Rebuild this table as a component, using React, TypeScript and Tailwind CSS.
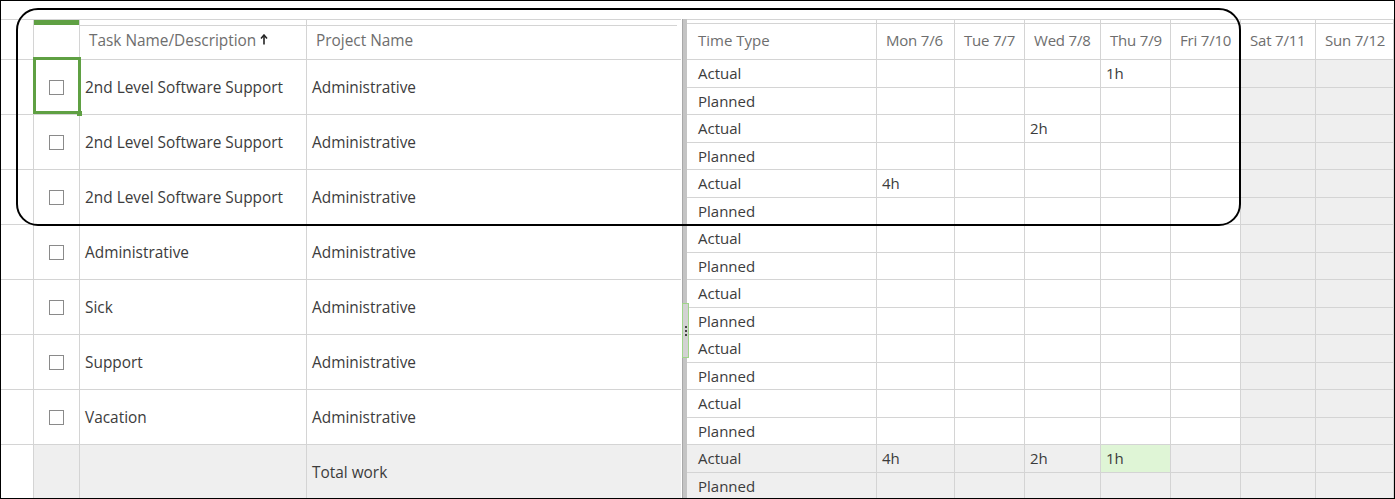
import React from "react";

const rows = [
  { task: "2nd Level Software Support", actual: { 3: "1h" } as Record<number, string> },
  { task: "2nd Level Software Support", actual: { 2: "2h" } as Record<number, string> },
  { task: "2nd Level Software Support", actual: { 0: "4h" } as Record<number, string> },
  { task: "Administrative", actual: {} as Record<number, string> },
  { task: "Sick", actual: {} as Record<number, string> },
  { task: "Support", actual: {} as Record<number, string> },
  { task: "Vacation", actual: {} as Record<number, string> },
];

const days = [
  { label: "Mon 7/6", w: "w-[78px]", weekend: false },
  { label: "Tue 7/7", w: "w-[70px]", weekend: false },
  { label: "Wed 7/8", w: "w-[76px]", weekend: false },
  { label: "Thu 7/9", w: "w-[70px]", weekend: false },
  { label: "Fri 7/10", w: "w-[70px]", weekend: false },
  { label: "Sat 7/11", w: "w-[75px]", weekend: true },
  { label: "Sun 7/12", w: "w-[78px]", weekend: true },
];

const font = { fontFamily: '"Open Sans", "Noto Sans", Arial, sans-serif' };

function Checkbox() {
  return <div className="w-[15px] h-[15px] border border-[#8a8a8a] bg-white" />;
}

function LeftRow({ task, total }: { task?: string; total?: boolean }) {
  const bg = total ? "bg-[#efefef]" : "bg-white";
  return (
    <div className="flex h-[55px] shrink-0">
      <div className="w-[33px] shrink-0 border-r border-b border-[#d4d4d4] bg-white" />
      <div className={`w-[46px] shrink-0 border-r border-b border-[#d4d4d4] flex items-center justify-center ${bg}`}>
        {!total && <Checkbox />}
      </div>
      <div className={`w-[227px] shrink-0 border-r border-b border-[#d4d4d4] flex items-center pl-[5px] pt-[1px] text-[#3c3c3c] whitespace-nowrap ${bg}`}>
        {task}
      </div>
      <div className={`w-[374px] shrink-0 border-b border-[#d4d4d4] flex items-center pl-[5px] pt-[1px] text-[#3c3c3c] ${bg}`}>
        {total ? "Total work" : "Administrative"}
      </div>
    </div>
  );
}

function SubRow({ label, values, total, h, highlightThu }: { label: string; values: Record<number, string>; total?: boolean; h: string; highlightThu?: boolean }) {
  return (
    <div className={`flex ${h} shrink-0`}>
      <div className={`w-[190px] shrink-0 border-r border-b border-[#d4d4d4] flex items-center pl-[11px] text-[#3c3c3c] ${total ? "bg-[#efefef]" : "bg-white"}`}>
        {label}
      </div>
      {days.map((d, i) => {
        let bg = total || d.weekend ? "bg-[#efefef]" : "bg-white";
        if (highlightThu && i === 3) bg = "bg-[#dff5d6]";
        return (
          <div
            key={i}
            className={`${d.w} shrink-0 border-r border-b border-[#d4d4d4] flex items-center pl-[5px] text-[#3c3c3c] ${bg}`}
          >
            {values[i] ?? ""}
          </div>
        );
      })}
    </div>
  );
}

export default function App() {
  return (
    <div
      className="relative w-[1395px] h-[499px] border border-black bg-white overflow-hidden text-[15.4px]"
      style={font}
    >
      <div className="h-[18px]" />
      <div className="flex">
        {/* Left table */}
        <div className="w-[680px] shrink-0 flex flex-col">
          <div className="flex h-[41px] shrink-0 border-t border-b border-[#d4d4d4]">
            <div className="w-[33px] shrink-0 border-r border-[#d4d4d4]" />
            <div className="w-[46px] shrink-0 border-r border-[#d4d4d4] flex flex-col">
              <div className="h-[5px] bg-[#5fa043]" />
            </div>
            <div className="w-[227px] shrink-0 border-r border-[#d4d4d4] flex flex-col">
              <div className="mt-[5px] border-t border-[#d4d4d4]" />
              <div className="flex-1 flex items-center pl-[9px] pb-[4px] text-[#6e6e6e] gap-[4px] whitespace-nowrap">
                <span>Task Name/Description</span>
                <svg width="8" height="11" viewBox="0 0 8 11" className="mb-[3px]">
                  <path d="M4 10.5V1.8" stroke="#222" strokeWidth="1.6" />
                  <path d="M1 4.6L4 1L7 4.6" fill="none" stroke="#222" strokeWidth="1.5" />
                </svg>
              </div>
            </div>
            <div className="w-[374px] shrink-0 flex flex-col">
              <div className="mt-[5px] border-t border-[#d4d4d4] mr-[4px]" />
              <div className="flex-1 flex items-center pl-[9px] pb-[4px] text-[#6e6e6e]">Project Name</div>
            </div>
          </div>
          {rows.map((r, i) => (
            <LeftRow key={i} task={r.task} />
          ))}
          <LeftRow total />
        </div>

        {/* Splitter */}
        <div className="w-[6px] shrink-0 flex justify-end">
          <div className="relative w-[5px] h-[500px] bg-[#c4c4c4] border-l border-[#a8a8a8]">
            <div className="absolute left-[-1px] top-[284px] w-[7px] h-[55px] border border-[#9fd48a] bg-[#d2d2d2] flex flex-col items-center justify-center gap-[2px]">
              <div className="w-[2px] h-[2px] bg-[#444]" />
              <div className="w-[2px] h-[2px] bg-[#444]" />
              <div className="w-[2px] h-[2px] bg-[#444]" />
            </div>
          </div>
        </div>

        {/* Right grid */}
        <div className="w-[707px] shrink-0 flex flex-col text-[15px]">
          <div className="flex h-[41px] shrink-0 border-t border-b border-[#d4d4d4]">
            <div className="w-[190px] shrink-0 border-r border-[#d4d4d4] flex flex-col">
              <div className="mt-[3px] border-t border-[#d4d4d4]" />
              <div className="flex-1 flex items-center pl-[11px] pb-[3px] text-[#6e6e6e]">Time Type</div>
            </div>
            {days.map((d, i) => (
              <div key={i} className={`${d.w} shrink-0 border-r border-[#d4d4d4] flex flex-col`}>
                <div className="mt-[3px] border-t border-[#d4d4d4]" />
                <div className="flex-1 flex items-center pl-[9px] pb-[3px] text-[#6e6e6e] whitespace-nowrap tracking-[-0.2px]">{d.label}</div>
              </div>
            ))}
          </div>
          {rows.map((r, i) => (
            <div key={i} className="flex flex-col">
              <SubRow label="Actual" values={r.actual} h="h-[28px]" />
              <SubRow label="Planned" values={{}} h="h-[27px]" />
            </div>
          ))}
          <SubRow label="Actual" values={{ 0: "4h", 2: "2h", 3: "1h" }} h="h-[28px]" total highlightThu />
          <SubRow label="Planned" values={{}} h="h-[27px]" total />
        </div>
      </div>

      {/* Selected cell overlay */}
      <div className="absolute left-[32px] top-[56px] w-[48px] h-[57px] border-[3px] border-[#5fa043] pointer-events-none" />
      <div className="absolute left-[76px] top-[110px] w-[5px] h-[5px] bg-[#5fa043] pointer-events-none" />

      {/* Annotation outline */}
      <div className="absolute left-[15px] top-[7px] w-[1225px] h-[218px] border-2 border-black rounded-[22px] pointer-events-none" />
    </div>
  );
}
